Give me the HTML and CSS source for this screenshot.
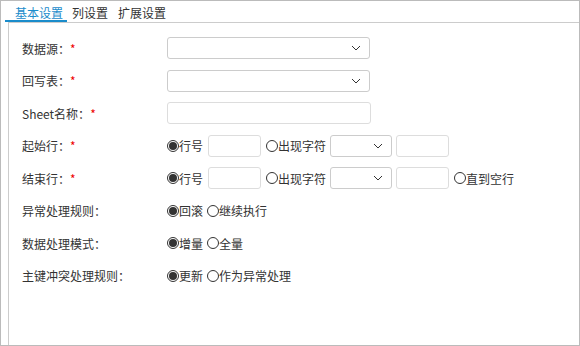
FILE: index.html
```html
<!DOCTYPE html>
<html lang="zh-CN">
<head>
    <meta charset="UTF-8">
    <title>基本设置</title>
    <link rel="stylesheet" href="styles.css">
</head>
<body>
    <div class="frame">
        <div class="tabs">
            <span class="tab active">基本设置</span>
            <span class="tab">列设置</span>
            <span class="tab">扩展设置</span>
        </div>

        <div class="panel">
            <div class="row">
                <label class="label">数据源：<em>*</em></label>
                <div class="select wide"><svg width="10" height="6" viewBox="0 0 10 6"><path d="M1 1 L5 5 L9 1" fill="none" stroke="#333" stroke-width="1"/></svg></div>
            </div>
            <div class="row">
                <label class="label">回写表：<em>*</em></label>
                <div class="select wide"><svg width="10" height="6" viewBox="0 0 10 6"><path d="M1 1 L5 5 L9 1" fill="none" stroke="#333" stroke-width="1"/></svg></div>
            </div>
            <div class="row">
                <label class="label">Sheet名称：<em>*</em></label>
                <div class="input wide"></div>
            </div>
            <div class="row">
                <label class="label">起始行：<em>*</em></label>
                <span class="radio checked"></span><span class="opt">行号</span>
                <div class="input small"></div>
                <span class="radio"></span><span class="opt">出现字符</span>
                <div class="select short"><svg width="10" height="6" viewBox="0 0 10 6"><path d="M1 1 L5 5 L9 1" fill="none" stroke="#333" stroke-width="1"/></svg></div>
                <div class="input small"></div>
            </div>
            <div class="row">
                <label class="label">结束行：<em>*</em></label>
                <span class="radio checked"></span><span class="opt">行号</span>
                <div class="input small"></div>
                <span class="radio"></span><span class="opt">出现字符</span>
                <div class="select short"><svg width="10" height="6" viewBox="0 0 10 6"><path d="M1 1 L5 5 L9 1" fill="none" stroke="#333" stroke-width="1"/></svg></div>
                <div class="input small"></div>
                <span class="radio"></span><span class="opt">直到空行</span>
            </div>
            <div class="row">
                <label class="label">异常处理规则：</label>
                <span class="radio checked"></span><span class="opt">回滚</span>
                <span class="radio"></span><span class="opt">继续执行</span>
            </div>
            <div class="row">
                <label class="label">数据处理模式：</label>
                <span class="radio checked"></span><span class="opt">增量</span>
                <span class="radio"></span><span class="opt">全量</span>
            </div>
            <div class="row">
                <label class="label">主键冲突处理规则：</label>
                <span class="radio checked"></span><span class="opt">更新</span>
                <span class="radio"></span><span class="opt">作为异常处理</span>
            </div>
        </div>
    </div>
</body>
</html>
```

FILE: styles.css
```css
body {
    margin: 0;
    font-family: "Noto Sans CJK SC", "Noto Sans", sans-serif;
    font-size: 12px;
    color: #333;
    background: white;
}
.frame {
    width: 580px;
    height: 346px;
    box-sizing: border-box;
    border: 1px solid #bbb;
    display: flex;
    flex-direction: column;
}
.tabs {
    display: flex;
    height: 21px;
    margin-left: 4px;
}
.tab {
    box-sizing: border-box;
    height: 21px;
    line-height: 24px;
    padding: 0 5px;
    color: #333;
}
.tab.active {
    padding: 0 4px 0 10px;
    color: #1a8ccb;
    border-bottom: 2px solid #1a8ccb;
}
.panel {
    flex: 1;
    margin-left: 7px;
    border-top: 1px solid #ccc;
    border-left: 1px solid #ccc;
    padding: 9px 0 0 13px;
}
.row {
    display: flex;
    align-items: center;
    height: 32.5px;
}
.label {
    width: 145px;
    flex-shrink: 0;
}
.label em {
    font-style: normal;
    color: #e00;
}
.select,
.input {
    box-sizing: border-box;
    height: 22px;
    border: 1px solid #ccc;
    border-radius: 3px;
}
.input {
    border-color: #ddd;
}
.select {
    display: flex;
    align-items: center;
    justify-content: flex-end;
    padding-right: 8px;
}
.wide {
    width: 203px;
}
.input.wide {
    width: 204px;
}
.small {
    width: 53px;
    margin: 0 5px 0 1px;
}
.short {
    width: 62px;
}
.short + .small {
    margin-left: 4px;
}
.radio {
    box-sizing: border-box;
    width: 12px;
    height: 12px;
    border: 1px solid #333;
    border-radius: 50%;
    flex-shrink: 0;
    display: flex;
    align-items: center;
    justify-content: center;
}
.radio.checked::after {
    content: "";
    width: 8px;
    height: 8px;
    border-radius: 50%;
    background: #333;
}
.opt {
    margin-right: 4px;
}
```
